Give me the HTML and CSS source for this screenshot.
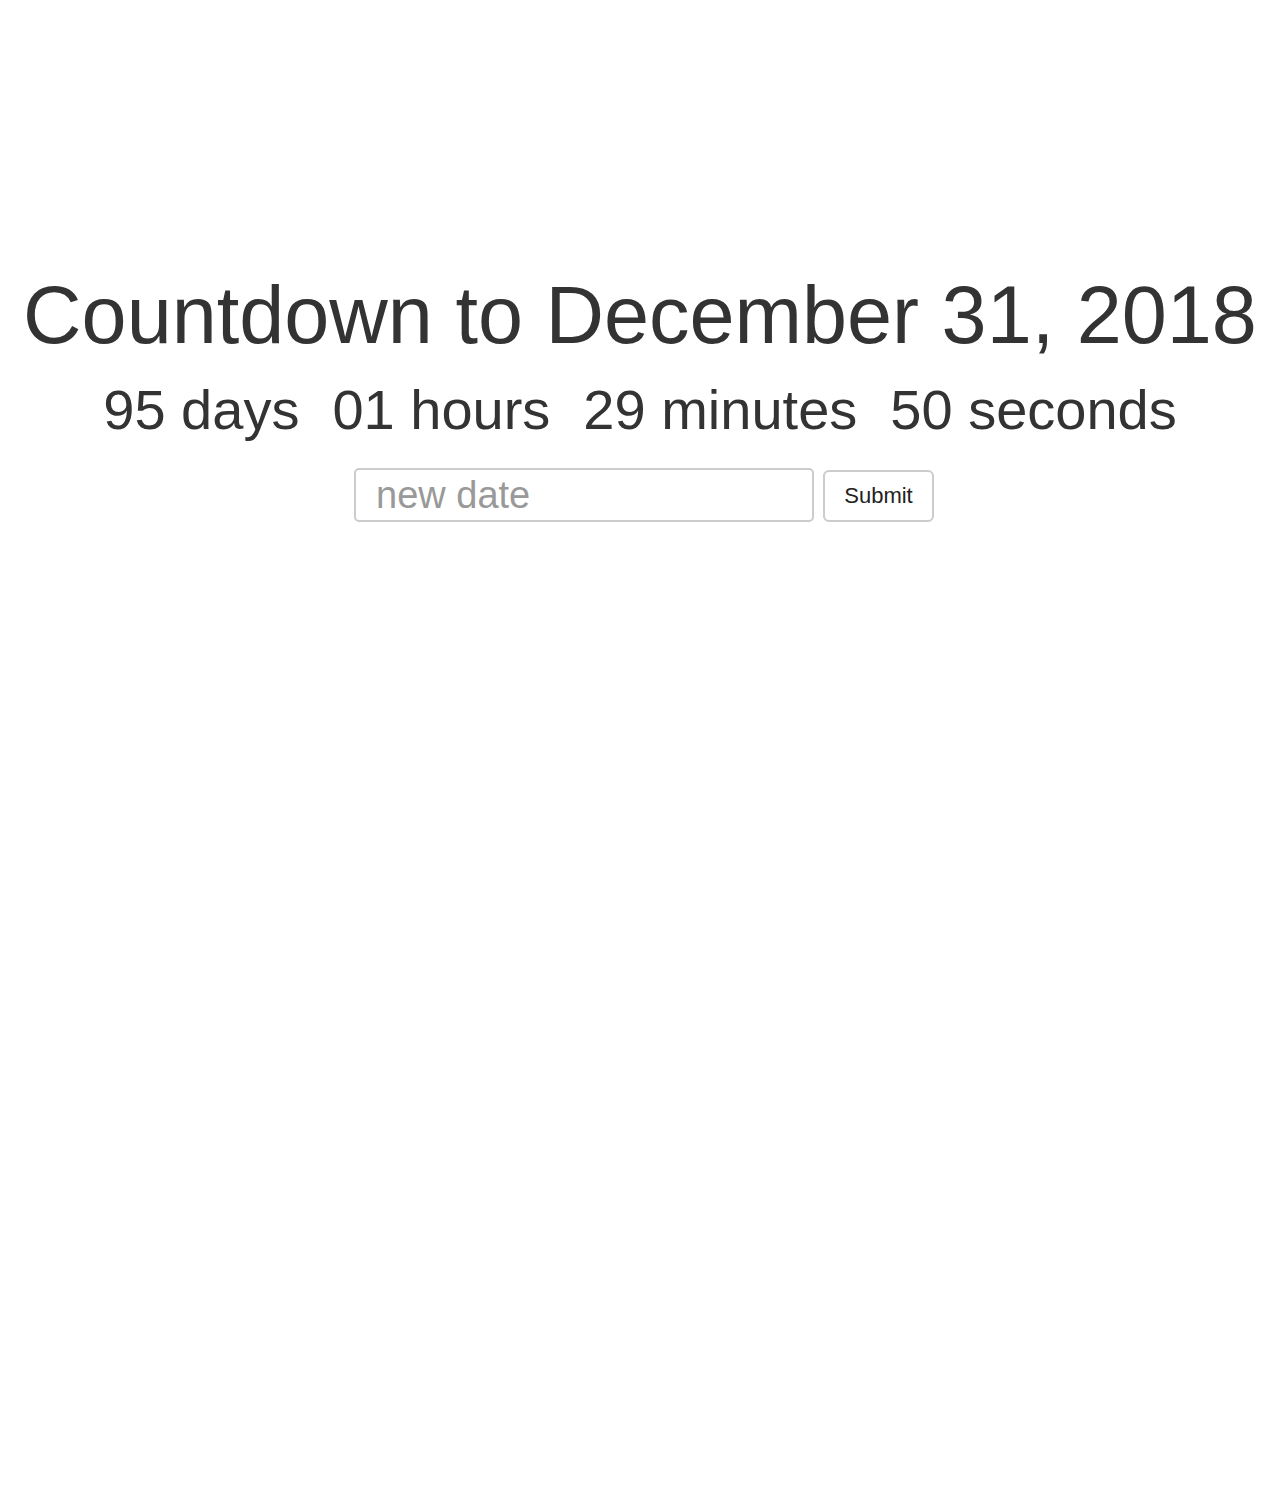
FILE: index.html
```html
<!DOCTYPE html>
<html>
<head>
<meta charset="utf-8">
<link rel="stylesheet" href="styles.css">
</head>
<body>
<div class="app">
  <h1 class="title">Countdown to December 31, 2018</h1>
  <div class="clock">
    <span class="unit">95 days</span>
    <span class="unit">01 hours</span>
    <span class="unit">29 minutes</span>
    <span class="unit">50 seconds</span>
  </div>
  <form class="form">
    <input class="date-input" type="text" placeholder="new date">
    <button class="submit" type="button">Submit</button>
  </form>
</div>
</body>
</html>
```
FILE: styles.css
```css
html, body {
  margin: 0;
  padding: 0;
  background: #fff;
}
body {
  font-family: "Liberation Sans", Arial, sans-serif;
  color: #333;
}
.app {
  padding-top: 269px;
  display: flex;
  flex-direction: column;
  align-items: center;
  text-align: center;
}
.title {
  margin: 0;
  font-size: 81px;
  font-weight: 400;
  line-height: 92px;
  white-space: nowrap;
}
.clock {
  display: flex;
  gap: 33px;
  font-size: 56px;
  line-height: 62px;
  margin-top: 18px;
  white-space: nowrap;
}
.form {
  display: flex;
  align-items: flex-end;
  gap: 9px;
  margin-top: 27px;
  margin-left: 8px;
}
.date-input {
  box-sizing: border-box;
  width: 460px;
  height: 54px;
  border: 2px solid #ccc;
  border-radius: 5px;
  padding: 0 20px;
  font-family: "Liberation Sans", Arial, sans-serif;
  font-size: 38px;
  color: #333;
  outline: none;
}
.date-input::placeholder {
  color: #999;
}
.submit {
  box-sizing: border-box;
  width: 111px;
  height: 52px;
  border: 2px solid #ccc;
  border-radius: 6px;
  background: #fff;
  font-family: "Liberation Sans", Arial, sans-serif;
  font-size: 22px;
  color: #222;
  padding: 0;
}
```
